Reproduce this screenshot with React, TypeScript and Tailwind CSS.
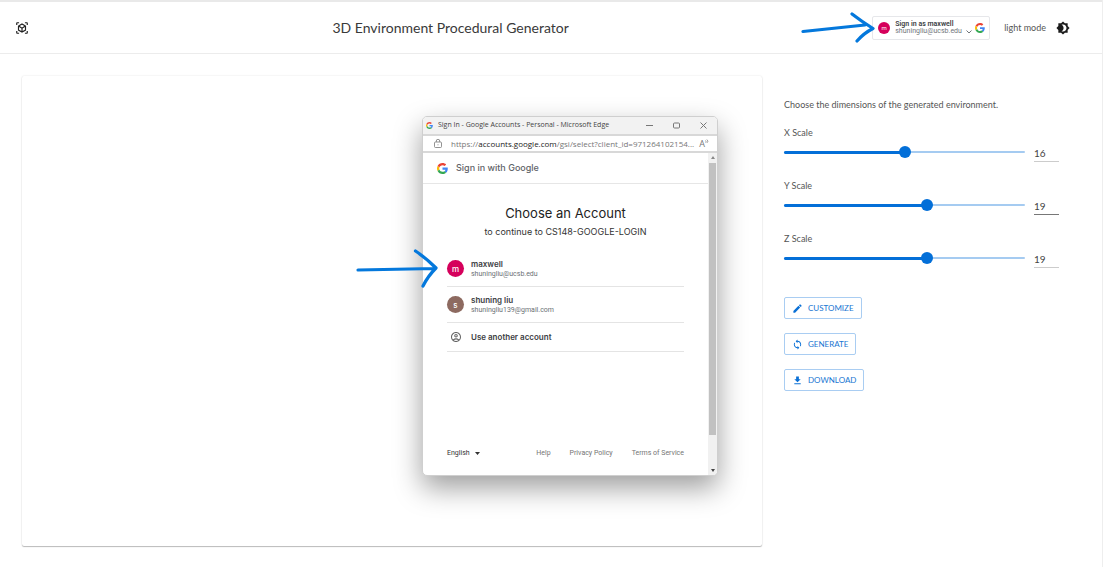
import { useState } from "react";
import {
  MdBrightness4,
  MdCreate,
  MdFileDownload,
  MdLoop,
  MdOutlineAccountCircle,
  MdViewInAr,
} from "react-icons/md";
import type { IconType } from "react-icons";

function GoogleLogo({ className }: { className: string }) {
  return (
    <svg viewBox="0 0 48 48" className={className} aria-hidden="true">
      <path fill="#EA4335" d="M24 9.5c3.54 0 6.71 1.22 9.21 3.6l6.85-6.85C35.9 2.38 30.47 0 24 0 14.62 0 6.51 5.38 2.56 13.22l7.98 6.19C12.43 13.72 17.74 9.5 24 9.5z" />
      <path fill="#4285F4" d="M46.98 24.55c0-1.57-.15-3.09-.38-4.55H24v9.02h12.94c-.58 2.96-2.26 5.48-4.78 7.18l7.73 6c4.51-4.18 7.09-10.36 7.09-17.65z" />
      <path fill="#FBBC05" d="M10.53 28.59c-.48-1.45-.76-2.99-.76-4.59s.27-3.14.76-4.59l-7.98-6.19C.92 16.46 0 20.12 0 24c0 3.88.92 7.54 2.56 10.78l7.97-6.19z" />
      <path fill="#34A853" d="M24 48c6.48 0 11.93-2.13 15.89-5.81l-7.73-6c-2.15 1.45-4.92 2.3-8.16 2.3-6.26 0-11.57-4.22-13.47-9.91l-7.98 6.19C6.51 42.62 14.62 48 24 48z" />
    </svg>
  );
}

function Header() {
  return (
    <header className="flex h-[54px] items-center justify-between border-t-2 border-b border-t-[#e9e9e9] border-b-[#ececec] pr-8 pl-[15px]">
      <MdViewInAr className="size-[14px] text-[#222]" />
      <h1 className="text-[14px] text-[#3a3a3a]">3D Environment Procedural Generator</h1>
      <div className="flex items-center">
        <button
          type="button"
          className="flex h-6 w-[118px] items-center rounded-xs border border-[#e6e7ea] bg-white pr-1 pl-[5px] text-left font-['Roboto',sans-serif]"
        >
          <span className="flex size-3 shrink-0 items-center justify-center rounded-full bg-[#d5005b] text-[6px] text-white">m</span>
          <span className="ml-[5px] flex-1 whitespace-nowrap">
            <span className="block text-[7px] leading-2 font-semibold text-[#3c4043]">Sign in as maxwell</span>
            <span className="flex items-center gap-1 text-[7px] leading-[7px] text-[#70757a]">
              shuningliu@ucsb.edu
              <svg viewBox="0 0 6 4" className="h-1 w-1.5" fill="none" stroke="currentColor" aria-hidden="true">
                <path d="M.5.5 3 3 5.5.5" />
              </svg>
            </span>
          </span>
          <GoogleLogo className="size-[10px] shrink-0" />
        </button>
        <span className="ml-[14px] text-[9px] text-[#555]">light mode</span>
        <button type="button" aria-label="Toggle theme" className="ml-2.5">
          <MdBrightness4 className="size-[14px] text-[#1c1c1c]" />
        </button>
      </div>
    </header>
  );
}

const SCALE_MAX = 32;

function ScaleField({ name, initial, line }: { name: string; initial: number; line: string }) {
  const [value, setValue] = useState(initial);
  const id = name.toLowerCase() + "-scale";
  return (
    <div className="h-[53px]">
      <label htmlFor={id} className="block text-[9px] leading-3 text-[#555]">
        {name} Scale
      </label>
      <div className="flex items-start gap-[9px]">
        <div className="relative mt-[7px] flex h-3 w-[241px] items-center">
          <div className="absolute inset-x-0 h-0.5 rounded-full bg-[#a5cbf1]" />
          <div
            className="absolute left-0 h-[3px] rounded-full bg-[#036fd8]"
            style={{ width: `${(value / SCALE_MAX) * 100}%` }}
          />
          <input
            id={id}
            type="range"
            min={0}
            max={SCALE_MAX}
            value={value}
            onChange={(e) => setValue(Number(e.target.value))}
            className="relative -mx-1.5 h-3 w-[253px] shrink-0 cursor-pointer appearance-none bg-transparent [&::-webkit-slider-thumb]:size-3 [&::-webkit-slider-thumb]:appearance-none [&::-webkit-slider-thumb]:rounded-full [&::-webkit-slider-thumb]:bg-[#036fd8]"
          />
        </div>
        <input
          type="text"
          inputMode="numeric"
          aria-label={`${name} scale value`}
          value={value}
          onChange={(e) => setValue(Math.min(SCALE_MAX, Number(e.target.value) || 0))}
          className={`mt-2 h-[15px] w-[25px] border-b pb-0.5 text-[10px] text-[#444] outline-none ${line}`}
        />
      </div>
    </div>
  );
}

function ActionButton({ icon: Icon, label }: { icon: IconType; label: string }) {
  return (
    <button
      type="button"
      className="flex h-[22px] items-center gap-[5px] rounded-xs border border-[#a9cdf2] px-[7px] text-[8px] text-[#1976d2]"
    >
      <Icon className="size-[11px] text-[#0a70d6]" />
      {label}
    </button>
  );
}

function Controls() {
  return (
    <section className="pt-[23px]">
      <p className="text-[9px] leading-3 text-[#555]">Choose the dimensions of the generated environment.</p>
      <div className="mt-4">
        <ScaleField name="X" initial={16} line="border-[#ccc]" />
        <ScaleField name="Y" initial={19} line="border-[#777]" />
        <ScaleField name="Z" initial={19} line="border-[#ccc]" />
      </div>
      <div className="mt-[11px] flex flex-col items-start gap-3.5">
        <ActionButton icon={MdCreate} label="CUSTOMIZE" />
        <ActionButton icon={MdLoop} label="GENERATE" />
        <ActionButton icon={MdFileDownload} label="DOWNLOAD" />
      </div>
    </section>
  );
}

function AccountRow({ initial, color, name, email }: { initial: string; color: string; name: string; email: string }) {
  return (
    <li className="border-b border-[#e4e4e4]">
      <button type="button" className="flex h-[35px] w-full items-center gap-[7px] text-left">
        <span className={`flex size-[17px] items-center justify-center rounded-full text-[8px] font-medium text-white ${color}`}>
          {initial}
        </span>
        <span>
          <span className="block text-[8px] leading-[10px] font-semibold text-[#3c4043]">{name}</span>
          <span className="block font-['Roboto',sans-serif] text-[7px] leading-[10px] text-[#6b7075]">{email}</span>
        </span>
      </button>
    </li>
  );
}

function SignInWindow() {
  return (
    <div
      role="dialog"
      aria-label="Sign in with Google"
      className="absolute top-[116px] left-[422px] flex h-[360px] w-[296px] flex-col overflow-hidden rounded-[5px] border border-[#cfcfcf] bg-white font-['Inter',sans-serif] shadow-[0_12px_28px_rgba(0,0,0,0.38)]"
    >
      <div className="flex h-[17px] shrink-0 items-center bg-[#f2f2f2] pr-[10px] pl-[3px] font-['Open_Sans',sans-serif]">
        <GoogleLogo className="size-[7px]" />
        <span className="ml-[5px] flex-1 text-[7px] whitespace-nowrap text-[#444]">
          Sign In - Google Accounts - Personal - Microsoft Edge
        </span>
        <div className="flex gap-5 text-[#777]">
          <button type="button" aria-label="Minimize">
            <svg viewBox="0 0 7 7" className="size-[7px]" fill="none" stroke="currentColor"><path d="M0 3.5h7" /></svg>
          </button>
          <button type="button" aria-label="Maximize">
            <svg viewBox="0 0 7 7" className="size-[7px]" fill="none" stroke="currentColor"><rect x=".5" y="1" width="6" height="5" rx="1" /></svg>
          </button>
          <button type="button" aria-label="Close">
            <svg viewBox="0 0 7 7" className="size-[7px]" fill="none" stroke="currentColor"><path d="m.5.5 6 6m0-6-6 6" /></svg>
          </button>
        </div>
      </div>
      <div className="flex h-[19px] shrink-0 items-center border-y-2 border-[#d8d8d8] pr-2 pl-[11px] font-['Open_Sans',sans-serif] text-[8px] text-[#777]">
        <svg viewBox="0 0 8 9" className="h-[9px] w-2" fill="none" stroke="#777" strokeWidth=".8" aria-hidden="true">
          <rect x=".5" y="3" width="7" height="5.5" rx="1" />
          <path d="M2.3 3V2a1.7 1.7 0 0 1 3.4 0v1M4 5.3v1" />
        </svg>
        <span className="ml-[9px] flex-1 whitespace-nowrap">
          https://<span className="text-[#222]">accounts.google.com</span>/gsi/select?client_id=971264102154...
        </span>
        <span aria-hidden="true" className="relative pr-1 text-[9px]">
          A
          <svg viewBox="0 0 4 5" className="absolute top-0.5 right-0 h-[5px] w-1" fill="none" stroke="currentColor" strokeWidth=".7">
            <path d="M.5 1.5q1 1 0 2M1.8.5q2.4 1.5 0 3.5" />
          </svg>
        </span>
      </div>
      <div className="flex min-h-0 flex-1">
        <div className="flex min-w-0 flex-1 flex-col">
          <div className="flex h-[31px] shrink-0 items-center gap-2 border-b border-[#e6e6e6] pl-3.5 text-[9px] font-medium text-[#5f6368]">
            <GoogleLogo className="size-[11px]" />
            Sign in with Google
          </div>
          <div className="flex flex-1 flex-col px-6">
            <h2 className="mt-5 text-center text-[13px] leading-[18px] text-[#222]">Choose an Account</h2>
            <p className="mt-1 text-center text-[9px] leading-[11px] text-[#333]">to continue to CS148-GOOGLE-LOGIN</p>
            <ul className="mt-3.5">
              <AccountRow initial="m" color="bg-[#d5005b]" name="maxwell" email="shuningliu@ucsb.edu" />
              <AccountRow initial="s" color="bg-[#8d6a60]" name="shuning liu" email="shuningliu139@gmail.com" />
              <li className="border-b border-[#e4e4e4]">
                <button type="button" className="flex h-7 w-full items-center text-[8px] font-semibold text-[#3c4043]">
                  <MdOutlineAccountCircle className="mx-[3px] size-3 text-[#666]" />
                  <span className="ml-1.5">Use another account</span>
                </button>
              </li>
            </ul>
            <footer className="mt-auto flex items-center pb-[17px] font-['Roboto',sans-serif] text-[7px] leading-[10px] text-[#757575]">
              <button type="button" className="flex items-center gap-[5px] text-[#333]">
                English
                <svg viewBox="0 0 5 3" className="h-[3px] w-[5px]" fill="currentColor" aria-hidden="true"><path d="M0 0h5L2.5 3z" /></svg>
              </button>
              <nav className="ml-auto flex gap-[19px]">
                <a href="#help">Help</a>
                <a href="#privacy">Privacy Policy</a>
                <a href="#terms">Terms of Service</a>
              </nav>
            </footer>
          </div>
        </div>
        <div aria-hidden="true" className="flex w-[9px] flex-col items-center bg-[#f1f1f1] py-[3px]">
          <svg viewBox="0 0 4 3" className="h-[3px] w-1" fill="#888"><path d="M0 3h4L2 0z" /></svg>
          <div className="mt-1 mb-[34px] w-[7px] flex-1 bg-[#c1c1c1]" />
          <svg viewBox="0 0 4 3" className="h-[3px] w-1" fill="#444"><path d="M0 0h4L2 3z" /></svg>
        </div>
      </div>
    </div>
  );
}

export default function App() {
  return (
    <div className="relative flex min-h-screen flex-col border-r border-[#eee] bg-white font-['Lato',sans-serif]">
      <Header />
      <main className="grid flex-1 grid-cols-[5fr_2fr] gap-[22px] px-[22px] pt-[22px] pb-[21px]">
        <section aria-label="Environment preview" className="rounded-xs bg-white shadow-[0_1px_1px_rgba(0,0,0,0.25),0_0_2px_rgba(0,0,0,0.12)]" />
        <Controls />
      </main>
      <SignInWindow />
      <svg viewBox="0 0 74 32" className="pointer-events-none absolute top-[11px] left-[801px] h-8 w-[74px]" fill="none" stroke="#0478dc" strokeWidth="3.2" strokeLinecap="round" strokeLinejoin="round" aria-hidden="true">
        <path d="M2 20.500 64 14M51 3q9 7 21 14.500Q63 22 56 30" />
      </svg>
      <svg viewBox="0 0 84 42" className="pointer-events-none absolute top-[248px] left-[355px] h-[42px] w-[84px]" fill="none" stroke="#0478dc" strokeWidth="3.2" strokeLinecap="round" strokeLinejoin="round" aria-hidden="true">
        <path d="M3 22 80 20.500M60.500 3Q71 10 81 20Q73 28 68 38" />
      </svg>
    </div>
  );
}
